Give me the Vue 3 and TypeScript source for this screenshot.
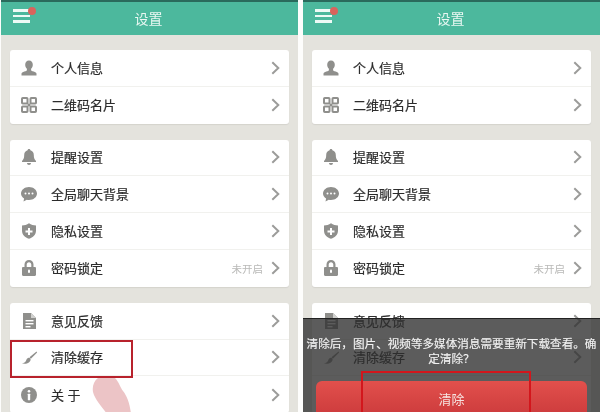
<script setup lang="ts">
interface Row { label: string; icon: string; hint?: string }
const groups: Row[][] = [
  [
    { label: '个人信息', icon: 'person' },
    { label: '二维码名片', icon: 'qr' },
  ],
  [
    { label: '提醒设置', icon: 'bell' },
    { label: '全局聊天背景', icon: 'chat' },
    { label: '隐私设置', icon: 'shield' },
    { label: '密码锁定', icon: 'lock', hint: '未开启' },
  ],
  [
    { label: '意见反馈', icon: 'doc' },
    { label: '清除缓存', icon: 'brush' },
    { label: '关 于', icon: 'info' },
  ],
]
const phones = [{ id: 'left', dialog: false }, { id: 'right', dialog: true }]
</script>

<template>
  <div class="root">
    <div v-for="p in phones" :key="p.id" class="phone" :class="p.id">
      <div class="topline"></div>
      <header class="bar">
        <span class="menu">
          <i></i><i></i><i></i>
          <b class="dot"></b>
        </span>
        <span class="title">设置</span>
      </header>
      <div class="list">
        <section v-for="(g, gi) in groups" :key="gi" class="card">
          <div v-for="r in g" :key="r.label" class="row">
            <svg class="icon" viewBox="0 0 18 18" fill="#8f8f8c">
              <template v-if="r.icon === 'person'">
                <path d="M9 1.500c2.400 0 3.800 1.800 3.800 4.200 0 1.700-.7 3.200-1.700 4v1.200c0 .7 1 1.100 2.600 1.700 1.700.7 2.800 1.300 2.800 2.200V16.500H1.500V14.800c0-.9 1.100-1.500 2.800-2.200 1.600-.6 2.600-1 2.600-1.700V9.700c-1-.8-1.700-2.300-1.700-4C5.200 3.300 6.600 1.500 9 1.500z" />
              </template>
              <template v-else-if="r.icon === 'qr'">
                <g fill="none" stroke="#8f8f8c" stroke-width="2">
                  <rect x="2" y="2" width="5.500" height="5.500" rx=".8" />
                  <rect x="10.500" y="2" width="5.500" height="5.500" rx=".8" />
                  <rect x="2" y="10.500" width="5.500" height="5.500" rx=".8" />
                  <rect x="10.500" y="10.500" width="5.500" height="5.500" rx=".8" />
                </g>
                <rect x="7.500" y="7.500" width="3" height="3" />
              </template>
              <template v-else-if="r.icon === 'bell'">
                <path d="M9 1c.8 0 1.300.5 1.400 1.200 2.200.6 3.400 2.400 3.400 4.800 0 3 .6 4.500 2.200 6v1H2v-1c1.600-1.500 2.200-3 2.200-6 0-2.400 1.200-4.200 3.400-4.800C7.700 1.500 8.200 1 9 1z" />
                <path d="M7 15h4c0 1.200-.9 2-2 2s-2-.8-2-2z" />
              </template>
              <template v-else-if="r.icon === 'chat'">
                <path d="M9 2c4.400 0 8 2.900 8 6.500S13.400 15 9 15c-.8 0-1.500-.1-2.200-.3L3.500 16.500l.6-3C2.200 12.300 1 10.500 1 8.500 1 4.900 4.600 2 9 2z" />
                <g fill="#fff"><circle cx="5.500" cy="8.500" r="1" /><circle cx="9" cy="8.500" r="1" /><circle cx="12.500" cy="8.500" r="1" /></g>
              </template>
              <template v-else-if="r.icon === 'shield'">
                <path d="M9 1.200c2.200 1.500 4.500 2.200 7 2.300v5c0 4.300-3 7-7 8.300-4-1.300-7-4-7-8.300v-5c2.500-.1 4.800-.8 7-2.300z" />
                <path d="M8 6h2v2.500h2.500v2H10V13H8v-2.500H5.500v-2H8z" fill="#fff" />
              </template>
              <template v-else-if="r.icon === 'lock'">
                <path d="M9 1c2.600 0 4.500 1.900 4.500 4.500V8h1.300c.7 0 1.200.5 1.200 1.200v6.600c0 .7-.5 1.200-1.200 1.200H3.200C2.500 17 2 16.500 2 15.800V9.200C2 8.500 2.500 8 3.200 8h1.300V5.500C4.500 2.900 6.400 1 9 1zm0 2.200c-1.400 0-2.300 1-2.300 2.300V8h4.600V5.500c0-1.300-.9-2.300-2.300-2.300z" />
                <rect x="8" y="10.500" width="2" height="3.500" rx="1" fill="#fff" />
              </template>
              <template v-else-if="r.icon === 'doc'">
                <path d="M3 1h8l5 5v11H3z" />
                <path d="M11 1l5 5h-5z" fill="#d0d0ce" />
                <g fill="#fff"><rect x="5.500" y="8" width="8" height="1.400" /><rect x="5.500" y="11" width="8" height="1.400" /><rect x="5.500" y="14" width="5" height="1.400" /></g>
              </template>
              <template v-else-if="r.icon === 'brush'">
                <path d="M16.500 3.500 9.500 9.300l1.400 1.500 6.200-6.300z" />
                <path d="M8.500 9.800c1.100-.3 2 .5 2.100 1.700.1 2-2.600 4.300-6.100 4.300-1.100 0-2-.3-2.500-.8 2 0 3.400-.7 4-2.300.5-1.300 1.200-2.500 2.500-2.900z" />
              </template>
              <template v-else>
                <circle cx="9" cy="9" r="8" />
                <g fill="#fff"><circle cx="9" cy="5.300" r="1.300" /><rect x="7.800" y="7.800" width="2.400" height="6.400" rx=".4" /></g>
              </template>
            </svg>
            <span class="label">{{ r.label }}</span>
            <span v-if="r.hint" class="hint">{{ r.hint }}</span>
            <svg class="chev" viewBox="0 0 9 14" fill="none" stroke="#9c9c9a" stroke-width="2">
              <path d="M1.300 1.200 7.300 7l-6 5.800" />
            </svg>
          </div>
        </section>
      </div>

      <template v-if="!p.dialog">
        <div class="mark-box"></div>
        <svg class="finger" viewBox="0 0 40 36">
          <path d="M6 0h17c4 4 5 9 8 13 4 5 7 13 8 23H15C11 30 3 22 1 14 0 8 2 3 6 0z" fill="#ecc4c6" />
        </svg>
      </template>
      <div v-else class="sheet">
        <p class="msg">清除后，图片、视频等多媒体消息需要重新下载查看。确定清除？</p>
        <div class="danger">清除</div>
        <div class="mark-btn"></div>
      </div>
    </div>
  </div>
</template>

<style>
html, body { margin: 0; background: #fff; }
</style>

<style scoped>
.root {
  width: 600px;
  height: 412px;
  display: flex;
  gap: 5px;
  padding-left: 1px;
  box-sizing: border-box;
  overflow: hidden;
  background: #fdfdfc;
  font-family: "Liberation Sans", "Noto Sans CJK SC", sans-serif;
  filter: blur(0.4px);
}
.phone {
  position: relative;
  width: 297px;
  height: 412px;
  flex: none;
  overflow: hidden;
  background: #e4e3dd;
}
.topline { height: 2px; background: #2a6a5c; }
.bar {
  height: 33px;
  background: #4cb89d;
  display: flex;
  align-items: center;
  justify-content: center;
  position: relative;
}
.title { color: #e8f7f2; font-size: 14px; margin: -2px 0 0 -2px; }
.menu {
  position: absolute;
  left: 12px;
  top: 7px;
  width: 17px;
  display: flex;
  flex-direction: column;
  gap: 3px;
}
.menu i { display: block; height: 2.500px; background: #eefaf6; }
.dot {
  position: absolute;
  left: 15px;
  top: -2px;
  width: 8px;
  height: 8px;
  border-radius: 50%;
  background: #d9635c;
}
.list {
  padding: 15px 9px 0;
  display: flex;
  flex-direction: column;
  gap: 16px;
}
.card {
  background: #fff;
  border-radius: 3px;
  box-shadow: 0 1px 1px #d4d3cd;
}
.row {
  height: 36.800px;
  box-sizing: border-box;
  display: flex;
  align-items: center;
  padding: 0 9px 0 10px;
  border-bottom: 1px solid #f1f1ee;
}
.row:last-child { border-bottom: 0; }
.icon { width: 18px; height: 18px; flex: none; }
.label {
  margin: -1px 0 0 13px;
  flex: 1;
  font-size: 13px;
  color: #2c2c2c;
  -webkit-text-stroke: 0.2px #2c2c2c;
}
.hint { font-size: 10.500px; color: #b9b9b7; margin-right: 8px; }
.chev { width: 9px; height: 14px; flex: none; }
.mark-box {
  position: absolute;
  left: 9px;
  top: 340px;
  width: 123px;
  height: 38px;
  box-sizing: border-box;
  border: 2.500px solid #b8222c;
}
.finger {
  position: absolute;
  left: 91px;
  top: 378px;
  width: 40px;
  height: 36px;
}
.sheet {
  position: absolute;
  left: 0;
  right: 0;
  top: 318px;
  bottom: 0;
  background: rgba(46, 46, 46, .78);
  border-top: 1px solid #222;
  box-sizing: border-box;
}
.msg {
  margin: 0;
  padding: 17px 0 0;
  color: #f2f2f2;
  font-size: 11.600px;
  line-height: 15px;
  text-align: center;
  -webkit-text-stroke: 0.15px #f2f2f2;
}
.danger {
  position: absolute;
  left: 13px;
  right: 13px;
  top: 62px;
  height: 40px;
  border-radius: 6px;
  background: linear-gradient(#e2504c, #c9383a);
  color: #f6e3e0;
  font-size: 13px;
  display: flex;
  justify-content: center;
  padding-top: 8px;
  box-sizing: border-box;
}
.mark-btn {
  position: absolute;
  left: 58px;
  top: 52px;
  width: 170px;
  height: 60px;
  box-sizing: border-box;
  border: 2px solid #d3161c;
}
</style>
